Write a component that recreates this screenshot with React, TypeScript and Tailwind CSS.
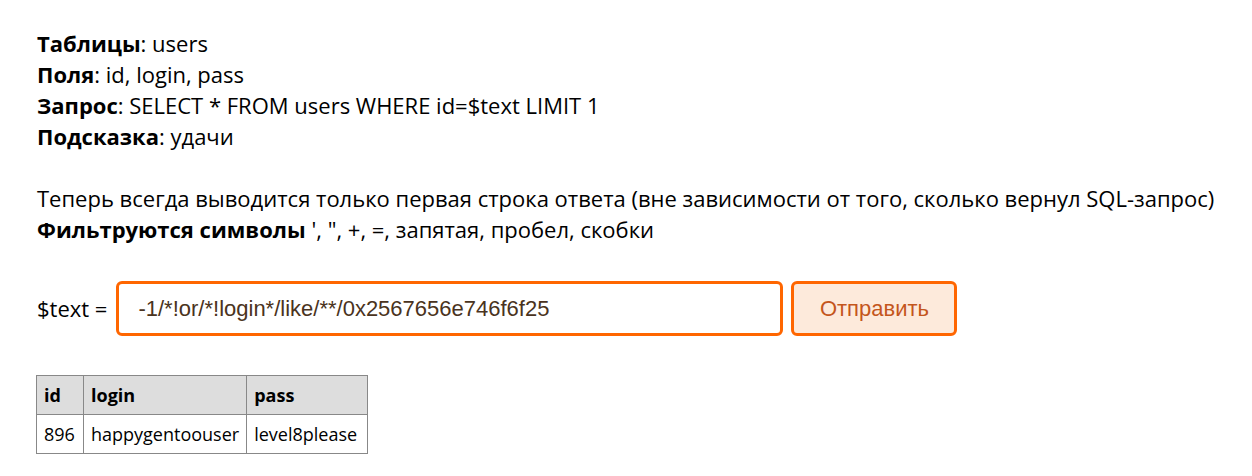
export default function App() {
  return (
    <div className="min-h-[476px] bg-white px-[37px] pt-[28px] text-[22px] leading-[31px] text-black font-['Open_Sans',sans-serif]">
      <div>
        <b>Таблицы</b>: users
        <br />
        <b>Поля</b>: id, login, pass
        <br />
        <b>Запрос</b>: SELECT * FROM users WHERE id=$text LIMIT 1
        <br />
        <b>Подсказка</b>: удачи
      </div>
      <div className="mt-[31px]">
        Теперь всегда выводится только первая строка ответа (вне зависимости от того, сколько вернул SQL-запрос)
        <br />
        <b>Фильтруются символы</b> ', ", +, =, запятая, пробел, скобки
      </div>
      <form className="mt-[36px] flex items-center" onSubmit={(e) => e.preventDefault()}>
        <span className="mr-[9px]">$text =</span>
        <input
          defaultValue="-1/*!or/*!login*/like/**/0x2567656e746f6f25"
          className="h-[55px] w-[667px] rounded-[6px] border-[3px] border-[#ff6600] px-[19px] font-['Liberation_Sans',Arial,sans-serif] text-[22px] text-[#4a3320] outline-none"
        />
        <button
          type="submit"
          className="ml-[8px] h-[55px] w-[166px] rounded-[6px] border-[3px] border-[#ff6600] bg-[#fdeadb] font-['Liberation_Sans',Arial,sans-serif] text-[22px] text-[#c4561c]"
        >
          Отправить
        </button>
      </form>
      <table className="mt-[39px] -ml-px border-collapse text-[18px] leading-[24px]">
        <thead>
          <tr className="bg-[#dddddd]">
            <th className="h-[39px] w-[47px] border border-[#888888] px-[7px] text-left font-bold">id</th>
            <th className="h-[39px] w-[162px] border border-[#888888] px-[7px] text-left font-bold">login</th>
            <th className="h-[39px] w-[121px] border border-[#888888] px-[7px] text-left font-bold">pass</th>
          </tr>
        </thead>
        <tbody>
          <tr>
            <td className="h-[39px] border border-[#888888] px-[7px]">896</td>
            <td className="h-[39px] border border-[#888888] px-[7px]">happygentoouser</td>
            <td className="h-[39px] border border-[#888888] px-[7px]">level8please</td>
          </tr>
        </tbody>
      </table>
    </div>
  );
}
